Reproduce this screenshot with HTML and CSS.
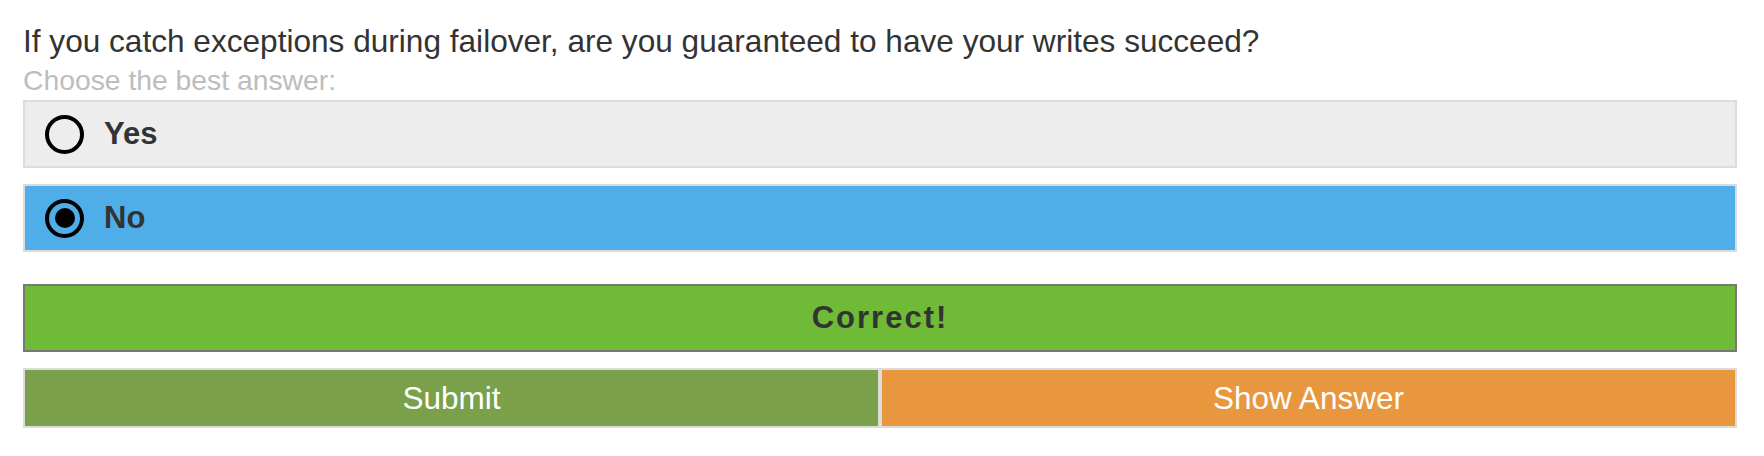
FILE: index.html
```html
<!DOCTYPE html>
<html lang="en">
<head>
<meta charset="utf-8">
<title>Quiz</title>
<link rel="stylesheet" href="styles.css">
</head>
<body>
<div class="quiz">
  <p class="question">If you catch exceptions during failover, are you guaranteed to have your writes succeed?</p>
  <p class="hint">Choose the best answer:</p>
  <div class="options">
    <div class="option">
      <span class="radio"></span>
      <span class="label">Yes</span>
    </div>
    <div class="option option-selected">
      <span class="radio radio-checked"><span class="dot"></span></span>
      <span class="label">No</span>
    </div>
  </div>
  <div class="result">Correct!</div>
  <div class="actions">
    <div class="btn btn-submit">Submit</div>
    <div class="btn btn-show">Show Answer</div>
  </div>
</div>
</body>
</html>
```
FILE: styles.css
```css
html, body {
  margin: 0;
  padding: 0;
  background: #ffffff;
}

body {
  font-family: "Liberation Sans", Arial, sans-serif;
  color: #333333;
}

.quiz {
  padding: 22px 27px 0 23px;
  display: flex;
  flex-direction: column;
}

.question {
  margin: 0;
  font-size: 31.6px;
  line-height: 38px;
  color: #333333;
}

.hint {
  margin: 3px 0 0 0;
  font-size: 28.3px;
  line-height: 34px;
  color: #bdbdbd;
}

.options {
  margin-top: 3px;
  display: flex;
  flex-direction: column;
  gap: 16px;
}

.option {
  height: 64px;
  border: 2px solid #dcdcdc;
  background: #ededed;
  display: flex;
  align-items: center;
  padding-left: 20px;
  gap: 20px;
}

.option-selected {
  background: #4faee7;
}

.radio {
  box-sizing: border-box;
  width: 39px;
  height: 39px;
  border: 4px solid #000000;
  border-radius: 50%;
  display: flex;
  align-items: center;
  justify-content: center;
  flex-shrink: 0;
}

.dot {
  width: 20px;
  height: 20px;
  border-radius: 50%;
  background: #000000;
}

.label {
  font-size: 31px;
  font-weight: bold;
  color: #333333;
}

.result {
  margin-top: 32px;
  height: 64px;
  border: 2px solid #777777;
  background: #6fba37;
  display: flex;
  align-items: center;
  justify-content: center;
  font-size: 31px;
  font-weight: bold;
  letter-spacing: 2px;
  color: #333333;
}

.actions {
  margin-top: 16px;
  display: grid;
  grid-template-columns: 1fr 1fr;
}

.btn {
  height: 56px;
  border: 2px solid #dcdcdc;
  display: flex;
  align-items: center;
  justify-content: center;
  font-size: 31.5px;
  color: #ffffff;
}

.btn-submit {
  background: #7aa049;
}

.btn-show {
  background: #e8973f;
}
```
